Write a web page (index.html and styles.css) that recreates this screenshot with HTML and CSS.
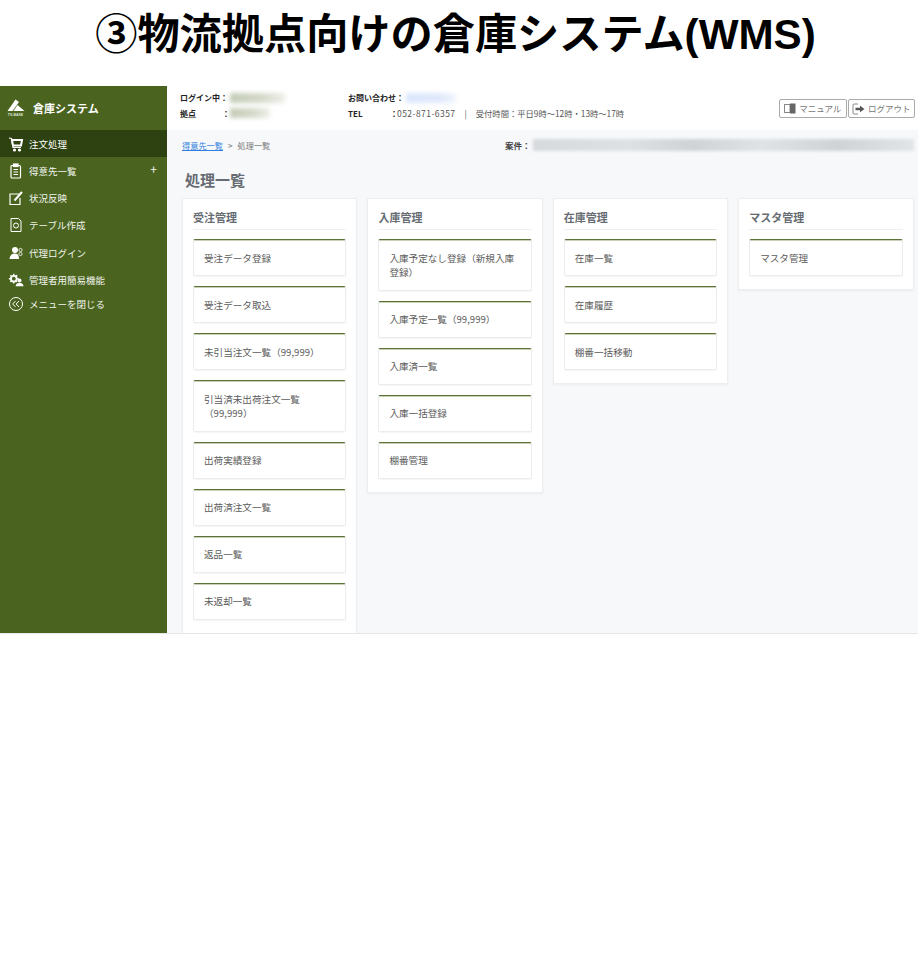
FILE: index.html
```html
<!DOCTYPE html>
<html lang="ja">
  <head>
    <meta charset="UTF-8" />
    <title>物流拠点向けの倉庫システム</title>
    <link rel="stylesheet" href="styles.css">
  </head>
  <body>
    <h1 class="page-title">③物流拠点向けの倉庫システム(WMS)</h1>

    <div class="app">
      <aside class="sidebar">
        <div class="brand">
          <svg class="logo" width="24" height="24" viewBox="0 0 24 24">
            <path d="M3.500 15 L11.500 3.500 L15 6 L8.500 15 Z" fill="#fff"/>
            <path d="M13.500 9 L20.500 15 H9.500 Z" fill="#fff"/>
            <text x="11.500" y="19.500" text-anchor="middle" class="logo-text">TS-BASE</text>
          </svg>
          <span>倉庫システム</span>
        </div>
        <nav class="menu">
          <a class="menu-item active">
            <svg width="16" height="16" viewBox="0 0 16 16" fill="none" stroke="#fff" stroke-width="1.200">
              <path d="M1 2 L3.500 2.500 L5 11.500 L13 11.500"/>
              <path d="M4 4 H14 L13 9.500 H5 Z" stroke-width="2"/>
              <circle cx="6.500" cy="14" r="1" fill="#fff"/>
              <circle cx="11.500" cy="14" r="1" fill="#fff"/>
            </svg>
            <span>注文処理</span>
          </a>
          <a class="menu-item">
            <svg width="16" height="16" viewBox="0 0 16 16" fill="none" stroke="#fff" stroke-width="1.200">
              <rect x="3" y="2.500" width="9.500" height="12.500" rx="1"/>
              <rect x="5.500" y="1" width="4.500" height="2.500" fill="#fff"/>
              <path d="M5.500 6.500h4.500M5.500 9h4.500M5.500 11.500h4.500"/>
            </svg>
            <span>得意先一覧</span>
            <i class="plus">+</i>
          </a>
          <a class="menu-item">
            <svg width="16" height="16" viewBox="0 0 16 16" fill="none" stroke="#fff" stroke-width="1.200">
              <path d="M11 4 H2 V14.500 H12 V8"/>
              <path d="M6.500 10.500 L14 2" stroke-width="2"/>
            </svg>
            <span>状況反映</span>
          </a>
          <a class="menu-item">
            <svg width="16" height="16" viewBox="0 0 16 16" fill="none" stroke="#fff" stroke-width="1">
              <path d="M3 1.500 H10.500 L13 4 V14.500 H3 Z"/>
              <circle cx="8" cy="8.500" r="2.500"/>
            </svg>
            <span>テーブル作成</span>
          </a>
          <a class="menu-item">
            <svg width="16" height="16" viewBox="0 0 16 16" fill="#fff">
              <circle cx="7" cy="5" r="3"/>
              <path d="M1.500 14 C2 9.500 4.500 8.500 7 8.500 C9.500 8.500 11 10 11 14 Z"/>
              <circle cx="12.500" cy="5" r="1.600" fill="none" stroke="#fff" stroke-width="0.800"/>
              <circle cx="12.500" cy="9" r="1.600" fill="none" stroke="#fff" stroke-width="0.800"/>
            </svg>
            <span>代理ログイン</span>
          </a>
          <a class="menu-item">
            <svg width="18" height="16" viewBox="0 0 18 16" fill="#fff">
              <circle cx="6.500" cy="6.500" r="3.200" fill="none" stroke="#fff" stroke-width="2"/>
              <path d="M6.500 1v2M6.500 10v2M1 6.500h2M10 6.500h2M2.700 2.700l1.400 1.400M8.900 8.900l1.400 1.400M10.300 2.700l-1.400 1.400M4.100 8.900l-1.400 1.400" stroke="#fff" stroke-width="1.600"/>
              <circle cx="13" cy="8.500" r="2.200"/>
              <path d="M8.500 15 C9 12 11 11.500 13 11.500 C15 11.500 17 12 17.500 15 Z"/>
            </svg>
            <span>管理者用簡易機能</span>
          </a>
          <a class="menu-item close">
            <svg width="16" height="16" viewBox="0 0 16 16" fill="none" stroke="#fff" stroke-width="1">
              <circle cx="8" cy="8" r="6.500"/>
              <path d="M7.500 5 L4.700 8 L7.500 11 M11 5 L8.200 8 L11 11"/>
            </svg>
            <span>メニューを閉じる</span>
          </a>
        </nav>
      </aside>

      <main class="main">
        <header class="topbar">
          <div class="info">
            <div class="info-row">
              <b class="label-login">ログイン中：</b>
              <span class="blur blur-green login-blur"></span>
            </div>
            <div class="info-row">
              <b class="label-login">拠点<span class="colon">：</span></b>
              <span class="blur blur-green base-blur"></span>
            </div>
          </div>
          <div class="info contact">
            <div class="info-row">
              <b>お問い合わせ：</b>
              <span class="blur blur-blue contact-blur"></span>
            </div>
            <div class="info-row">
              <b class="label-tel">TEL</b>
              <b class="tel-colon">：</b>
              <span class="tel">052-871-6357</span>
              <span class="sep">|</span>
              <span>受付時間：平日9時～12時・13時～17時</span>
            </div>
          </div>
          <div class="actions">
            <a class="btn">
              <svg width="12" height="11" viewBox="0 0 12 11">
                <rect x="0.500" y="1.500" width="5.500" height="8" fill="none" stroke="#888"/>
                <path d="M6 0.500 H11.500 V10.500 H6 Z" fill="#666"/>
              </svg>
              <span>マニュアル</span>
            </a>
            <a class="btn">
              <svg width="13" height="12" viewBox="0 0 13 12">
                <path d="M6 1 H2 Q1 1 1 2 V10 Q1 11 2 11 H6" fill="none" stroke="#888"/>
                <path d="M3.500 4.800 H8 V2.800 L12.500 6 L8 9.200 V7.200 H3.500 Z" fill="#555"/>
              </svg>
              <span>ログアウト</span>
            </a>
          </div>
        </header>

        <div class="content">
          <div class="crumb-row">
            <div class="crumbs"><a>得意先一覧</a><span class="gt">&gt;</span><span>処理一覧</span></div>
            <div class="case">
              <b>案件：</b>
              <span class="blur case-blur"></span>
            </div>
          </div>
          <h2 class="section-title">処理一覧</h2>

          <div class="board">
            <section class="group">
              <h3>受注管理</h3>
              <a class="item">受注データ登録</a>
              <a class="item">受注データ取込</a>
              <a class="item">未引当注文一覧（99,999）</a>
              <a class="item">引当済未出荷注文一覧<br>（99,999）</a>
              <a class="item">出荷実績登録</a>
              <a class="item">出荷済注文一覧</a>
              <a class="item">返品一覧</a>
              <a class="item">未返却一覧</a>
            </section>
            <section class="group">
              <h3>入庫管理</h3>
              <a class="item">入庫予定なし登録（新規入庫登録）</a>
              <a class="item">入庫予定一覧（99,999）</a>
              <a class="item">入庫済一覧</a>
              <a class="item">入庫一括登録</a>
              <a class="item">棚番管理</a>
            </section>
            <section class="group">
              <h3>在庫管理</h3>
              <a class="item">在庫一覧</a>
              <a class="item">在庫履歴</a>
              <a class="item">棚番一括移動</a>
            </section>
            <section class="group">
              <h3>マスタ管理</h3>
              <a class="item">マスタ管理</a>
            </section>
          </div>
        </div>
      </main>
    </div>
  </body>
</html>
```

FILE: styles.css
```css
* {
  box-sizing: border-box;
}

body {
  margin: 0;
  background-color: #fff;
  font-family: "Noto Sans CJK JP", "Noto Sans", sans-serif;
  color: #555;
}

.page-title {
  margin: 0;
  height: 86px;
  padding: 5px 7px 0 0;
  text-align: center;
  font-family: "Liberation Sans", "Noto Sans CJK JP", sans-serif;
  font-size: 42.200px;
  line-height: 60px;
  font-weight: 700;
  color: #000;
}

.app {
  display: flex;
  height: 548px;
  overflow: hidden;
  border-bottom: 1px solid #e4e6e8;
}

.sidebar {
  width: 167px;
  flex-shrink: 0;
  background-color: #4a641f;
  color: #fff;
}

.brand {
  display: flex;
  align-items: center;
  gap: 5px;
  height: 44px;
  padding: 0 0 0 4px;
  font-size: 11px;
  font-weight: 700;
}

.logo-text {
  font-family: "Liberation Sans", sans-serif;
  font-size: 3.500px;
  font-weight: 700;
  fill: #dfe5d4;
}

.menu-item {
  display: flex;
  align-items: center;
  gap: 5px;
  height: 27.300px;
  padding-left: 8px;
  font-size: 9.500px;
  color: #f2f4ee;
}

.menu-item svg {
  width: 16px;
  flex-shrink: 0;
}

.menu-item.active {
  height: 27px;
  background-color: #2d4210;
  color: #fff;
}

.menu-item.close {
  height: 22px;
}

.plus {
  margin-left: auto;
  margin-right: 10px;
  margin-top: -3px;
  font-style: normal;
  font-size: 12px;
  line-height: 12px;
}

.main {
  flex: 1;
  min-width: 0;
}

.topbar {
  display: flex;
  height: 44px;
  padding: 4px 3px 0 13px;
  background-color: #fff;
  font-size: 8.300px;
  color: #555;
}

.info {
  width: 168px;
}

.info b {
  color: #222;
  font-size: 8px;
}

.info.contact {
  width: auto;
}

.info-row {
  display: flex;
  align-items: center;
  height: 16px;
  margin-top: -0.500px;
  white-space: nowrap;
}

.label-login {
  width: 50px;
}

.colon {
  margin-left: 26px;
}

.label-tel {
  width: 42px;
}

.tel-colon {
  width: 7px;
}

.tel {
  font-size: 8.500px;
  letter-spacing: 0.450px;
}

.sep {
  margin: 0 9px;
}

.blur {
  display: block;
  height: 10px;
  filter: blur(2px);
}

.blur-green {
  background: linear-gradient(90deg, #c4ccb6, #d5dacb 60%, #eef0ea);
}

.blur-blue {
  background: linear-gradient(90deg, #dbe6fb, #e0e9fb 70%, #f2f6fd);
}

.login-blur {
  width: 55px;
}

.base-blur {
  width: 40px;
}

.contact-blur {
  width: 50px;
  margin-left: 2px;
}

.actions {
  display: flex;
  gap: 1px;
  margin-left: auto;
  padding-top: 9px;
}

.btn {
  display: flex;
  align-items: center;
  justify-content: center;
  gap: 3px;
  height: 19px;
  width: 67.500px;
  padding-bottom: 2px;
  border: 1px solid #aaa;
  border-radius: 2px;
  background-color: #fff;
  font-size: 8.500px;
  color: #777;
}

.btn svg {
  margin-top: 2px;
}

.content {
  height: 504px;
  padding: 0 4px 0 15px;
  background-color: #f6f8fa;
}

.crumb-row {
  display: flex;
  align-items: center;
  justify-content: space-between;
  height: 30px;
}

.crumbs {
  font-size: 8.200px;
  color: #777;
}

.crumbs a {
  color: #2f7fe0;
  text-decoration: underline;
}

.gt {
  margin: 0 5px;
}

.case {
  display: flex;
  align-items: center;
  font-size: 8.500px;
}

.case b {
  color: #444;
  width: 28px;
}

.case-blur {
  width: 381px;
  height: 12px;
  background: linear-gradient(90deg, #d6dadd, #dee1e4 25%, #cfd3d6 42%, #e0e3e5 60%, #cfd3d6 80%, #e2e5e7);
  filter: blur(1.500px);
}

.section-title {
  margin: 0 0 0 3px;
  height: 38px;
  padding-top: 10px;
  font-size: 15px;
  line-height: 20px;
  font-weight: 700;
  color: #666c72;
}

.board {
  display: flex;
  align-items: flex-start;
  gap: 10px;
}

.group {
  width: 175.400px;
  padding: 10px 10px 13px;
  background-color: #fff;
  border: 1px solid #eceef0;
  box-shadow: 0 1px 2px rgba(0, 0, 0, 0.05);
}

.group h3 {
  margin: 0 0 9px;
  height: 21px;
  font-size: 11px;
  line-height: 17px;
  font-weight: 700;
  color: #666c72;
  border-bottom: 1px solid #eef0f1;
}

.item {
  display: block;
  margin-bottom: 10px;
  padding: 10.500px 10px 10px;
  font-size: 9.600px;
  line-height: 14.500px;
  color: #5c5c5c;
  background-color: #fff;
  border: 1px solid #eaecee;
  border-top: 1px solid #5e7238;
  border-radius: 2px;
  box-shadow: inset 0 1px 0 #c9d0ba, 0 1px 1px rgba(0, 0, 0, 0.04);
}

.item:last-child {
  margin-bottom: 0;
}
```
